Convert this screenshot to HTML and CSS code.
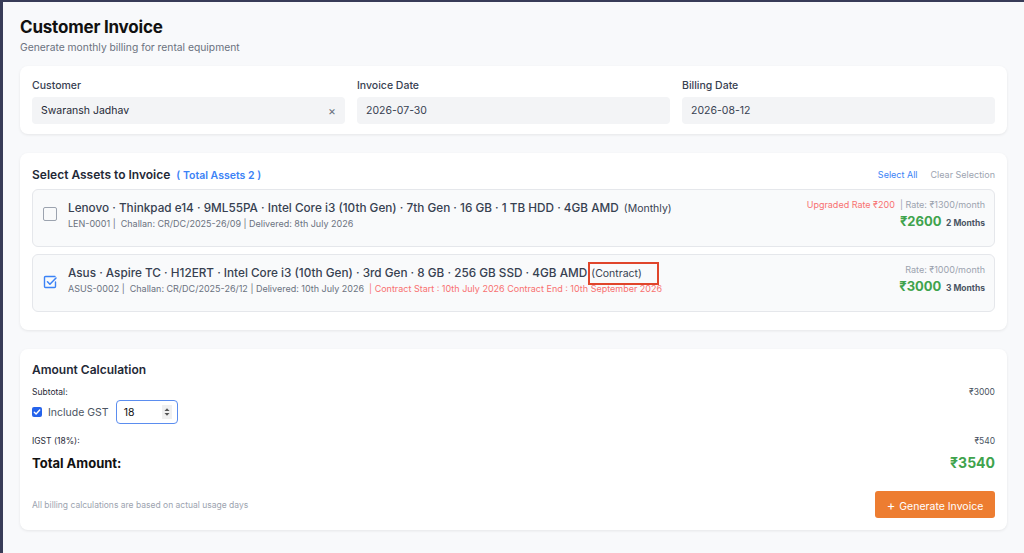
FILE: index.html
```html
<!DOCTYPE html>
<html lang="en">
<head>
    <meta charset="UTF-8">
    <meta name="viewport" content="width=device-width, initial-scale=1.0">
    <title>Customer Invoice</title>
    <link rel="stylesheet" href="styles.css">
</head>
<body>
    <main class="page">
        <header class="page-header">
            <h1 class="page-title">Customer Invoice</h1>
            <p class="page-subtitle">Generate monthly billing for rental equipment</p>
        </header>

        <!-- Customer + dates -->
        <section class="card details-card">
            <div class="field">
                <label class="field-label">Customer</label>
                <div class="field-input">
                    <span>Swaransh Jadhav</span>
                    <span class="clear-x">&times;</span>
                </div>
            </div>
            <div class="field">
                <label class="field-label">Invoice Date</label>
                <div class="field-input">2026-07-30</div>
            </div>
            <div class="field">
                <label class="field-label">Billing Date</label>
                <div class="field-input">2026-08-12</div>
            </div>
        </section>

        <!-- Assets -->
        <section class="card assets-card">
            <div class="assets-head">
                <h2 class="card-title">Select Assets to Invoice <span class="total-assets">( Total Assets 2 )</span></h2>
                <div class="assets-actions">
                    <span class="link-blue">Select All</span>
                    <span class="link-gray">Clear Selection</span>
                </div>
            </div>

            <div class="asset-row">
                <span class="check"></span>
                <div class="asset-info">
                    <div class="asset-name">Lenovo · Thinkpad e14 · 9ML55PA · Intel Core i3 (10th Gen) · 7th Gen · 16 GB · 1 TB HDD · 4GB AMD <span class="asset-type">(Monthly)</span></div>
                    <div class="asset-meta">LEN-0001 | &nbsp;Challan: CR/DC/2025-26/09 | Delivered: 8th July 2026</div>
                </div>
                <div class="asset-price">
                    <div class="rate-line"><span class="upgraded">Upgraded Rate ₹200</span> &nbsp;| Rate: ₹1300/month</div>
                    <div class="amount-line"><span class="amount">₹2600</span> <span class="months">2 Months</span></div>
                </div>
            </div>

            <div class="asset-row">
                <span class="check checked">
                    <svg width="14" height="14" viewBox="0 0 14 14" fill="none">
                        <path d="M12 1.5H2.5a1 1 0 0 0-1 1v9a1 1 0 0 0 1 1h9a1 1 0 0 0 1-1V7" stroke="#3b82f6" stroke-width="1.4" stroke-linecap="round"/>
                        <path d="M4.5 6.8l2.4 2.4L13 3" stroke="#3b82f6" stroke-width="1.5" stroke-linecap="round" stroke-linejoin="round"/>
                    </svg>
                </span>
                <div class="asset-info">
                    <div class="asset-name">Asus · Aspire TC · H12ERT · Intel Core i3 (10th Gen) · 3rd Gen · 8 GB · 256 GB SSD · 4GB AMD <span class="asset-type marked">(Contract)</span></div>
                    <div class="asset-meta">ASUS-0002 | &nbsp;Challan: CR/DC/2025-26/12 | Delivered: 10th July 2026 &nbsp;<span class="contract">| Contract Start : 10th July 2026 Contract End : 10th September 2026</span></div>
                </div>
                <div class="asset-price">
                    <div class="rate-line">Rate: ₹1000/month</div>
                    <div class="amount-line"><span class="amount">₹3000</span> <span class="months">3 Months</span></div>
                </div>
            </div>
        </section>

        <!-- Amount -->
        <section class="card amount-card">
            <h2 class="card-title">Amount Calculation</h2>
            <div class="calc-row subtotal">
                <span>Subtotal:</span>
                <span>₹3000</span>
            </div>
            <div class="gst-row">
                <span class="mini-check">
                    <svg width="8" height="8" viewBox="0 0 8 8"><path d="M1.3 4.2l1.8 1.8L6.7 2" fill="none" stroke="#fff" stroke-width="1.4" stroke-linecap="round" stroke-linejoin="round"/></svg>
                </span>
                <span class="gst-label">Include GST</span>
                <div class="gst-input">
                    <span>18</span>
                    <span class="spinner">
                        <svg width="6" height="10" viewBox="0 0 6 10"><path d="M0.5 4L3 1.2 5.5 4zM0.5 6L3 8.8 5.5 6z" fill="#555"/></svg>
                    </span>
                </div>
            </div>
            <div class="calc-row igst">
                <span>IGST (18%):</span>
                <span>₹540</span>
            </div>
            <div class="total-row">
                <span>Total Amount:</span>
                <span class="total-value">₹3540</span>
            </div>
            <div class="footer-row">
                <span class="footnote">All billing calculations are based on actual usage days</span>
                <button class="generate-btn"><span class="plus">+</span> Generate Invoice</button>
            </div>
        </section>
    </main>
</body>
</html>
```

FILE: styles.css
```css
* {
    margin: 0;
    padding: 0;
    box-sizing: border-box;
}

body {
    font-family: Inter, 'Noto Sans', 'DejaVu Sans', sans-serif;
    background-color: #f8f9fb;
    color: #1f2937;
    border-top: 2px solid #383c58;
    border-left: 3px solid #383c58;
    height: 553px;
    overflow: hidden;
}

.page {
    padding: 14px 17px 0 17px;
}

/* Header */
.page-title {
    font-size: 17px;
    font-weight: 700;
    color: #111;
    letter-spacing: -0.2px;
    line-height: 22px;
}

.page-subtitle {
    font-size: 10.3px;
    color: #6b7280;
    margin-top: 3px;
}

/* Cards */
.card {
    background: #fff;
    border-radius: 8px;
    box-shadow: 0 1px 3px rgba(0, 0, 0, 0.08);
}

.details-card {
    margin-top: 13px;
    padding: 13px 12px 10px 12px;
    display: grid;
    grid-template-columns: 1fr 1fr 1fr;
    gap: 12px;
}

.field-label {
    display: block;
    font-size: 10.5px;
    color: #374151;
    font-weight: 500;
    margin-bottom: 4px;
    line-height: 14px;
}

.field-input {
    height: 27px;
    background: #f3f4f6;
    border-radius: 4px;
    padding: 0 9px;
    display: flex;
    align-items: center;
    justify-content: space-between;
    font-size: 10.5px;
    color: #374151;
}

.field-input span:first-child {
    color: #1f2937;
}

.clear-x {
    color: #6b7280;
    font-size: 12px;
}

/* Assets */
.assets-card {
    margin-top: 19px;
    padding: 14px 12px 18px 12px;
}

.assets-head {
    display: flex;
    justify-content: space-between;
    align-items: center;
    margin-bottom: 7px;
}

.card-title {
    font-size: 12px;
    font-weight: 600;
    color: #1f2937;
}

.total-assets {
    color: #3b82f6;
    font-size: 10.5px;
    font-weight: 600;
    margin-left: 3px;
}

.assets-actions {
    font-size: 9px;
    display: flex;
    gap: 13px;
}

.link-blue {
    color: #3b82f6;
}

.link-gray {
    color: #9ca3af;
}

.asset-row {
    display: flex;
    align-items: flex-start;
    background: #f9fafb;
    border: 1px solid #e5e7eb;
    border-radius: 6px;
    height: 58px;
    padding: 9px 9px 0 10px;
}

.asset-row + .asset-row {
    margin-top: 7px;
}

.check {
    width: 14px;
    height: 14px;
    border: 1.5px solid #9ca3af;
    border-radius: 2px;
    margin-top: 8px;
    flex-shrink: 0;
}

.check.checked {
    border: none;
    margin-top: 9px;
}

.asset-info {
    flex: 1;
    margin-left: 11px;
}

.asset-name {
    font-size: 11.75px;
    color: #374151;
    font-weight: 500;
    line-height: 18px;
}

.asset-type {
    font-size: 10.5px;
    font-weight: 400;
    margin-left: 2px;
}

.asset-type.marked {
    margin-left: 0;
    outline: 2px solid #e0452b;
    outline-offset: 0;
    padding: 3px 15px 3px 1px;
}

.asset-meta {
    font-size: 9px;
    color: #6b7280;
}

.contract {
    color: #f87171;
}

.asset-price {
    text-align: right;
    padding-top: 0;
}

.rate-line {
    font-size: 9px;
    color: #9ca3af;
    line-height: 12px;
}

.upgraded {
    color: #f87171;
}

.amount-line {
    margin-top: 1px;
    line-height: 16px;
}

.amount {
    color: #3fa34d;
    font-size: 13px;
    font-weight: 700;
}

.months {
    color: #4b5563;
    font-size: 8.5px;
    font-weight: 700;
}

/* Amount calculation */
.amount-card {
    margin-top: 19px;
    padding: 13px 12px 12px 12px;
}

.calc-row {
    display: flex;
    justify-content: space-between;
    font-size: 8.5px;
    color: #1f2937;
}

.calc-row span:last-child {
    color: #4b5563;
}

.calc-row.subtotal {
    margin-top: 10px;
}

.gst-row {
    display: flex;
    align-items: center;
    margin-top: 3px;
}

.mini-check {
    width: 10px;
    height: 10px;
    background: #2563eb;
    border-radius: 2px;
    display: flex;
    align-items: center;
    justify-content: center;
}

.gst-label {
    font-size: 10.5px;
    color: #4b5563;
    margin-left: 6px;
}

.gst-input {
    margin-left: 7px;
    width: 62px;
    height: 24px;
    border: 1.5px solid #5b8def;
    border-radius: 4px;
    display: flex;
    align-items: center;
    justify-content: space-between;
    padding: 0 5px 0 7px;
    font-size: 10.5px;
    color: #111;
    background: #fff;
}

.spinner {
    background: #f0f0f0;
    width: 10px;
    height: 14px;
    display: flex;
    align-items: center;
    justify-content: center;
}

.calc-row.igst {
    margin-top: 12px;
}

.total-row {
    display: flex;
    justify-content: space-between;
    align-items: center;
    margin-top: 8px;
    font-size: 13px;
    font-weight: 700;
    color: #111;
}

.total-value {
    color: #3fa34d;
    font-size: 14px;
}

.footer-row {
    display: flex;
    justify-content: space-between;
    align-items: center;
    margin-top: 20px;
}

.footnote {
    font-size: 8.5px;
    color: #9ca3af;
}

.generate-btn {
    font-family: inherit;
    background: #ed7d31;
    color: #fff;
    border: none;
    border-radius: 3px;
    width: 120px;
    height: 27px;
    font-size: 10.5px;
    flex-shrink: 0;
}

.plus {
    font-size: 13px;
    margin-right: 1px;
}
```
